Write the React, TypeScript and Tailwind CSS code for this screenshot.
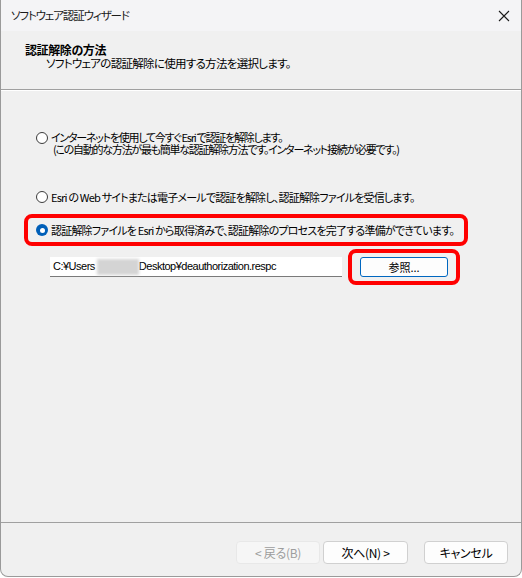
import React from "react";

const jp = "[font-family:'Noto_Sans_CJK_JP','Noto_Sans',sans-serif] [font-feature-settings:'palt']";

function Radio({ checked }: { checked?: boolean }) {
  if (checked) {
    return (
      <span className="block w-[12px] h-[12px] rounded-full bg-[#005fb8] flex items-center justify-center shrink-0">
        <span className="block w-[5px] h-[5px] rounded-full bg-white" />
      </span>
    );
  }
  return <span className="block w-[12px] h-[12px] rounded-full border border-[#3c3c3c] bg-white shrink-0" />;
}

const body = "text-[11px] tracking-[-0.8px] whitespace-nowrap leading-[12px]";

export default function App() {
  return (
    <div className={`w-[522px] h-[578px] bg-white overflow-hidden ${jp} text-[12px] text-black`}>
      <div className="w-[522px] h-[577px] border-l border-r border-b border-[#9a9a9a] rounded-b-[8px] overflow-hidden flex flex-col bg-[#f0f0f0]">
        {/* title bar */}
        <div className="h-[31px] bg-[#f4f4f6] flex items-center justify-between pl-[10px] pr-[9px] shrink-0">
          <span className="text-[11.5px] tracking-[-1.1px] text-[#1b1b1b] leading-none whitespace-nowrap">ソフトウェア認証ウィザード</span>
          <svg width="12" height="12" viewBox="0 0 12 12" className="mr-[2px]">
            <path d="M1 1 L11 11 M11 1 L1 11" stroke="#1b1b1b" strokeWidth="1.1" />
          </svg>
        </div>
        {/* header */}
        <div className="h-[58px] bg-[#f0f0f0] pt-[12px] pl-[24px] shrink-0">
          <div className="font-bold leading-[14px] text-[12px] tracking-[-0.4px]">認証解除の方法</div>
          <div className="pl-[21px] leading-[13px] text-[11.5px] tracking-[-0.7px] whitespace-nowrap">ソフトウェアの認証解除に使用する方法を選択します。</div>
        </div>
        <div className="h-px bg-[#a0a0a0] shrink-0" />
        <div className="h-px bg-white shrink-0" />
        {/* content */}
        <div className="flex-1 pt-[40px] pl-[23px]">
          <div className="flex items-start pl-[12px]">
            <div className="mt-[1px]"><Radio /></div>
            <div className="pl-[3px] text-[11px] tracking-[-1.25px] whitespace-nowrap leading-[12px]">
              <div>インターネットを使用して今すぐ Esri で認証を解除します。</div>
              <div className="pl-[2px]">(この自動的な方法が最も簡単な認証解除方法です。インターネット接続が必要です。)</div>
            </div>
          </div>
          <div className="flex items-center pl-[12px] mt-[36px] h-[12px]">
            <Radio />
            <span className={`pl-[3px] ${body}`}>Esri の Web サイトまたは電子メールで認証を解除し、認証解除ファイルを受信します。</span>
          </div>
          <div className="mt-[11px] w-[444px] h-[32px] border-[4px] border-[#ff0000] rounded-[8px] flex items-center pl-[8px]">
            <Radio checked />
            <span className={`pl-[3px] ${body}`}>認証解除ファイルを Esri から取得済みで、認証解除のプロセスを完了する準備ができています。</span>
          </div>
          <div className="mt-[3px] flex items-start">
            <div className="ml-[26px] mt-[8px] w-[292px] h-[20px] bg-white border-b border-[#7a7a7a] flex items-center pl-[3px] [font-family:'Liberation_Sans',sans-serif] text-[11px] tracking-[-0.5px] text-black whitespace-nowrap">
              <span>C:¥Users</span>
              <span className="inline-block ml-[2px] w-[42px] h-[16px] bg-[#d4d4d4] blur-[1.5px]" />
              <span>Desktop¥deauthorization.respc</span>
            </div>
            <div className="ml-[6px] w-[112px] h-[36px] border-[4px] border-[#ff0000] rounded-[8px] flex items-center pl-[8px]">
              <div className="w-[88px] h-[20px] bg-[#fdfdfd] border border-[#0067c0] rounded-[3px] flex items-center justify-center text-[11px] leading-none">
                参照...
              </div>
            </div>
          </div>
        </div>
        <div className="h-px bg-[#a0a0a0] shrink-0" />
        {/* footer */}
        <div className="h-[53px] shrink-0 flex justify-end items-start pt-[18px] pr-[13px] text-[12px] tracking-[-0.3px]">
          <div className="w-[84px] h-[23px] rounded-[4px] bg-[#f6f6f6] border border-[#e8e8e8] text-[#9d9d9d] flex items-center justify-center">&lt; 戻る(B)</div>
          <div className="ml-[3px] w-[85px] h-[23px] rounded-[4px] bg-[#fdfdfd] border border-[#d0d0d0] flex items-center justify-center">次へ(N) &gt;</div>
          <div className="ml-[16px] w-[84px] h-[23px] rounded-[4px] bg-[#fdfdfd] border border-[#d0d0d0] flex items-center justify-center">キャンセル</div>
        </div>
      </div>
    </div>
  );
}
